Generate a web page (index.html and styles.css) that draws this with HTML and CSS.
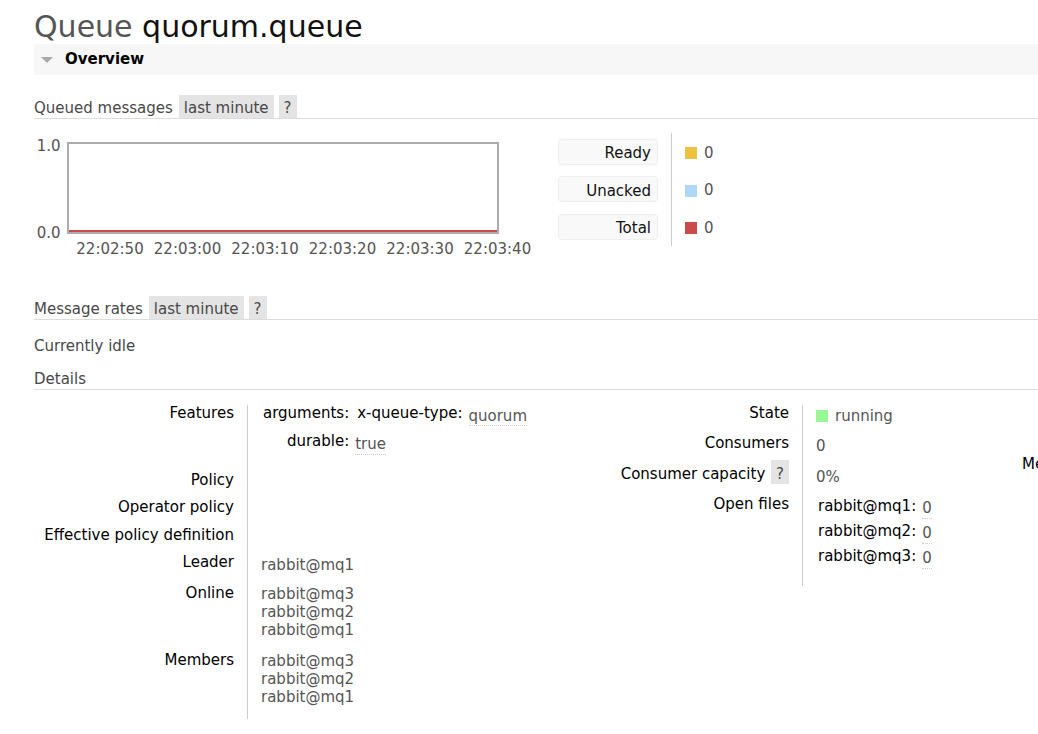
FILE: index.html
```html
<!DOCTYPE html>
<html>
<head>
<meta charset="utf-8">
<title>Queue quorum.queue</title>
<link rel="stylesheet" href="styles.css">
</head>
<body>
<h1 class="title">Queue <b>quorum.queue</b></h1>
<div class="section-bar"><span class="tri"></span><span class="section-name">Overview</span></div>

<h3 class="sub"><span class="sub-label">Queued messages</span><span class="pill">last minute</span><span class="pill">?</span></h3>
<div class="chart-row">
  <div class="chart">
    <div class="plot-row">
      <div class="yaxis"><span>1.0</span><span>0.0</span></div>
      <div class="plot"><div class="series"></div></div>
    </div>
    <div class="xaxis">
      <span>22:02:50</span><span>22:03:00</span><span>22:03:10</span><span>22:03:20</span><span>22:03:30</span><span>22:03:40</span>
    </div>
  </div>
  <div class="legend">
    <div class="lg-label"><span class="lg-box">Ready</span></div>
    <div class="lg-value"><span class="sw sw-ready"></span>0</div>
    <div class="lg-label"><span class="lg-box">Unacked</span></div>
    <div class="lg-value"><span class="sw sw-unacked"></span>0</div>
    <div class="lg-label"><span class="lg-box">Total</span></div>
    <div class="lg-value"><span class="sw sw-total"></span>0</div>
  </div>
</div>

<h3 class="sub sub-rates"><span class="sub-label">Message rates</span><span class="pill">last minute</span><span class="pill">?</span></h3>
<p class="idle">Currently idle</p>

<h3 class="sub sub-details"><span>Details</span></h3>
<div class="details">
  <div class="facts facts-left">
    <div class="fk">Features</div>
    <div class="fv nest">
      <div class="mini">
        <div class="mk">arguments:</div>
        <div class="mv"><span class="mk2">x-queue-type:</span><span class="val">quorum</span></div>
        <div class="mk">durable:</div>
        <div class="mv"><span class="val">true</span></div>
      </div>
    </div>
    <div class="fk">Policy</div>
    <div class="fv"></div>
    <div class="fk">Operator policy</div>
    <div class="fv"></div>
    <div class="fk">Effective policy definition</div>
    <div class="fv"></div>
    <div class="fk">Leader</div>
    <div class="fv">rabbit@mq1</div>
    <div class="fk">Online</div>
    <div class="fv list"><div>rabbit@mq3</div><div>rabbit@mq2</div><div>rabbit@mq1</div></div>
    <div class="fk">Members</div>
    <div class="fv list"><div>rabbit@mq3</div><div>rabbit@mq2</div><div>rabbit@mq1</div></div>
  </div>
  <div class="facts facts-right">
    <div class="fk">State</div>
    <div class="fv"><span class="sq"></span>running</div>
    <div class="fk">Consumers</div>
    <div class="fv">0</div>
    <div class="fk">Consumer capacity <span class="pill pill-inline">?</span></div>
    <div class="fv">0%</div>
    <div class="fk">Open files</div>
    <div class="fv nest files">
      <div class="mini mini-files">
        <div class="mk">rabbit@mq1:</div>
        <div class="mv"><span class="val">0</span></div>
        <div class="mk">rabbit@mq2:</div>
        <div class="mv"><span class="val">0</span></div>
        <div class="mk">rabbit@mq3:</div>
        <div class="mv"><span class="val">0</span></div>
      </div>
    </div>
  </div>
  <div class="third">Messages</div>
</div>
</body>
</html>
```

FILE: styles.css
```css
html, body {
  margin: 0;
  padding: 0;
  overflow: hidden;
  background: #fff;
}

body {
  font-family: "DejaVu Sans", Verdana, sans-serif;
  font-size: 15px;
  line-height: 17.5px;
  color: #484848;
  padding-left: 34px;
}

.title {
  margin: 9px 0 0;
  font-size: 30px;
  font-weight: normal;
  line-height: 35px;
  color: #555;
  white-space: nowrap;
}

.title b {
  font-weight: normal;
  color: #111;
}

.section-bar {
  display: flex;
  align-items: center;
  height: 30px;
  padding-top: 1px;
  background: #f7f7f7;
  padding-left: 7px;
}

.tri {
  width: 0;
  height: 0;
  border-left: 6.5px solid transparent;
  border-right: 6.5px solid transparent;
  border-top: 6px solid #aaa;
  margin-right: 12px;
}

.section-name {
  font-weight: bold;
  color: #000;
}

.sub {
  display: flex;
  align-items: baseline;
  gap: 5px;
  margin: 20px 0 0;
  font-size: 15px;
  font-weight: normal;
  border-bottom: 1px solid #ddd;
  color: #484848;
  white-space: nowrap;
}

.sub-label {
  margin-right: 1px;
}

.pill {
  background: #e4e4e4;
  padding: 4.5px 5px 1px;
  color: #484848;
}

.pill-inline {
  margin-left: 1px;
}

.sub-rates {
  margin-top: 38px;
}

.chart-row {
  display: flex;
  margin-top: 14px;
}

.chart {
  width: 524px;
  flex-shrink: 0;
}

.plot-row {
  display: flex;
  margin-top: 9px;
}

.yaxis {
  width: 33px;
  box-sizing: border-box;
  padding-right: 6.4px;
  text-align: right;
  display: flex;
  flex-direction: column;
  justify-content: space-between;
  margin: -4px 0 -8px;
  color: #545454;
}

.plot {
  width: 432px;
  height: 92px;
  box-sizing: border-box;
  border: 2px solid #adadad;
  display: flex;
  flex-direction: column;
  justify-content: flex-end;
}

.series {
  height: 2px;
  background: #cb4b4b;
}

.xaxis {
  display: flex;
  padding-left: 37.25px;
  margin-top: 6.5px;
  color: #545454;
}

.xaxis span {
  width: 77.5px;
  flex-shrink: 0;
  text-align: center;
}

.legend {
  display: grid;
  grid-template-columns: 113px auto;
  grid-auto-rows: 37.5px;
}

.lg-label {
  padding-right: 13px;
  display: flex;
  align-items: center;
}

.lg-box {
  width: 100px;
  height: 26px;
  box-sizing: border-box;
  border: 1px solid #eee;
  border-radius: 4px;
  background: #f9f9f9;
  text-align: right;
  padding: 1.5px 6px 0 0;
  line-height: 24px;
  color: #111;
}

.lg-value {
  border-left: 1px solid #ccc;
  padding-left: 13px;
  padding-top: 3px;
  display: flex;
  align-items: center;
  color: #555;
}

.sw {
  width: 12px;
  height: 12px;
  margin-right: 7px;
}

.sw-ready { background: #edc240; }
.sw-unacked { background: #afd8f8; }
.sw-total { background: #cb4b4b; }

.idle {
  margin: 17.5px 0 0;
}

.sub-details {
  margin-top: 15.8px;
  padding-bottom: 1px;
}

.details {
  display: flex;
  align-items: flex-start;
  margin-top: 14.4px;
}

.facts {
  display: grid;
  flex-shrink: 0;
}

.facts-left {
  grid-template-columns: 213px 300px;
}

.facts-right {
  grid-template-columns: 255px 205px;
}

.fk {
  text-align: right;
  padding: 0 13px 10px 0;
  color: #000;
  white-space: nowrap;
}

.fv {
  border-left: 1px solid #ccc;
  padding: 3px 0 10px 13px;
  color: #555;
  white-space: nowrap;
}

.fv.nest {
  padding-top: 0;
}

.fv.files {
  padding-bottom: 13px;
}

.fv.list {
  padding-top: 0.5px;
  padding-bottom: 12.5px;
}

.list div {
  line-height: 18px;
}

.mini {
  display: grid;
  grid-template-columns: max-content max-content;
}

.mk {
  text-align: right;
  padding: 0 6px 7px 2px;
  color: #000;
}

.mv {
  display: flex;
  align-items: flex-start;
  padding-bottom: 7px;
}

.mk2 {
  color: #000;
  margin-left: 2px;
  margin-right: 6px;
}

.val {
  padding-top: 3px;
  border-bottom: 1px dotted #ccc;
  color: #555;
}

.mini-files {
  grid-auto-rows: 25px;
  padding-top: 2px;
}

.mini-files .mk,
.mini-files .mv {
  padding-bottom: 0;
}

.mini-files .val {
  padding-top: 2px;
}

.sq {
  display: inline-block;
  width: 12px;
  height: 12px;
  background: #98f898;
  vertical-align: -1px;
  margin-right: 7px;
}

.third {
  margin: 51.7px 0 0 15px;
  color: #000;
  white-space: nowrap;
  flex-shrink: 0;
}
```
